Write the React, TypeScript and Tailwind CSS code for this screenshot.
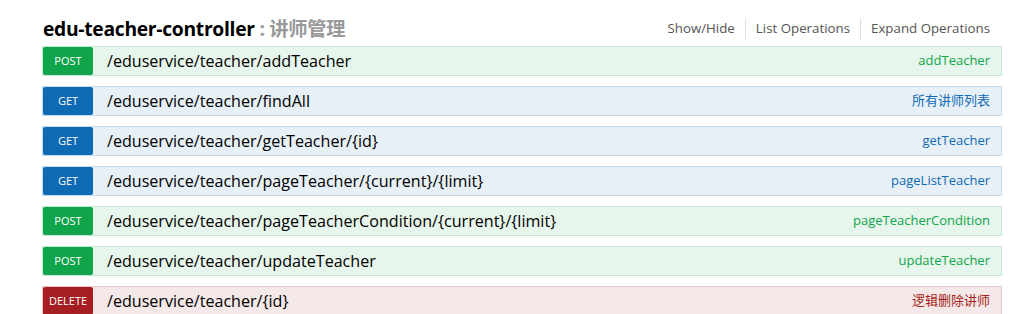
const ops = [
  { method: "POST", path: "/eduservice/teacher/addTeacher", summary: "addTeacher" },
  { method: "GET", path: "/eduservice/teacher/findAll", summary: "所有讲师列表" },
  { method: "GET", path: "/eduservice/teacher/getTeacher/{id}", summary: "getTeacher" },
  { method: "GET", path: "/eduservice/teacher/pageTeacher/{current}/{limit}", summary: "pageListTeacher" },
  { method: "POST", path: "/eduservice/teacher/pageTeacherCondition/{current}/{limit}", summary: "pageTeacherCondition" },
  { method: "POST", path: "/eduservice/teacher/updateTeacher", summary: "updateTeacher" },
  { method: "DELETE", path: "/eduservice/teacher/{id}", summary: "逻辑删除讲师" },
];

const styles: Record<string, { row: string; badge: string; text: string }> = {
  POST: {
    row: "bg-[#e7f6ec] border-[#c3e8d1]",
    badge: "bg-[#10a54a]",
    text: "text-[#10a54a]",
  },
  GET: {
    row: "bg-[#e7f0f7] border-[#c3d9ec]",
    badge: "bg-[#0f6ab4]",
    text: "text-[#0f6ab4]",
  },
  DELETE: {
    row: "bg-[#f5e8e8] border-[#e8c6c7]",
    badge: "bg-[#a41e22]",
    text: "text-[#a41e22]",
  },
};

const font = "font-['Open_Sans','Noto_Sans_CJK_SC',sans-serif]";

export default function App() {
  return (
    <div className={`${font} w-[1019px] h-[314px] overflow-hidden bg-white`}>
      <div className="ml-[42px] w-[960px]">
        <div className="flex h-[46px] items-center justify-between pt-[12px]">
          <h2 className="pl-[1px] text-[19.3px] font-bold tracking-[-0.3px] text-black">
            edu-teacher-controller
            <span className="text-[#999]"> : 讲师管理</span>
          </h2>
          <div className="flex items-center pr-[12px] text-[13.3px] text-[#555]">
            <span className="px-[10px]">Show/Hide</span>
            <span className="border-l border-[#ddd] px-[10px]">List Operations</span>
            <span className="border-l border-[#ddd] pl-[10px]">Expand Operations</span>
          </div>
        </div>

        <div className="flex flex-col gap-[10px]">
          {ops.map((op) => {
            const s = styles[op.method];
            return (
              <div
                key={op.path + op.method}
                className={`flex h-[30px] items-center border ${s.row}`}
              >
                <span
                  className={`flex h-[28px] w-[50px] items-center justify-center rounded-[2px] text-[11px] text-white ${s.badge}`}
                >
                  {op.method}
                </span>
                <span className="ml-[14px] text-[16.1px] text-black">{op.path}</span>
                <span className={`ml-auto pr-[11px] text-[13px] ${s.text}`}>
                  {op.summary}
                </span>
              </div>
            );
          })}
        </div>
      </div>
    </div>
  );
}
